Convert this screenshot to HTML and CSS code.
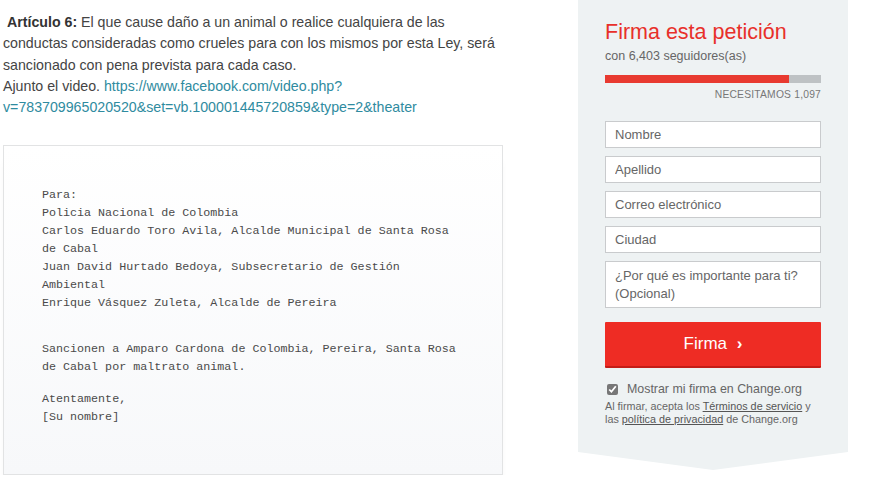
FILE: index.html
```html
<!DOCTYPE html>
<html lang="es">
<head>
<meta charset="utf-8">
<title>Firma esta petición</title>
<link rel="stylesheet" href="styles.css">
</head>
<body>
<div class="page">
  <main class="content">
    <p class="desc">&nbsp;<strong>Artículo 6:</strong> El que cause daño a un animal o realice cualquiera de las conductas consideradas como crueles para con los mismos por esta Ley, será sancionado con pena prevista para cada caso.<br>Ajunto el video. <a href="#">https://www.facebook.com/video.php?<wbr>v=783709965020520&amp;set=vb.100001445720859&amp;type=2&amp;theater</a></p>
    <div class="letter">
      <p class="l-block l-first">Para:<br>Policia Nacional de Colombia<br>Carlos Eduardo Toro Avila, Alcalde Municipal de Santa Rosa de Cabal<br>Juan David Hurtado Bedoya, Subsecretario de Gestión Ambiental<br>Enrique Vásquez Zuleta, Alcalde de Pereira</p>
      <p class="l-block">Sancionen a Amparo Cardona de Colombia, Pereira, Santa Rosa de Cabal por maltrato animal.</p>
      <p class="l-block l-last">Atentamente,<br>[Su nombre]</p>
    </div>
  </main>
  <aside class="panel">
    <h2 class="title">Firma esta petición</h2>
    <p class="count">con 6,403 seguidores(as)</p>
    <div class="progress"><div class="progress-fill" style="width:85.2%"></div></div>
    <p class="need">NECESITAMOS 1,097</p>
    <form class="form">
      <input class="field" type="text" placeholder="Nombre">
      <input class="field" type="text" placeholder="Apellido">
      <input class="field" type="text" placeholder="Correo electrónico">
      <input class="field" type="text" placeholder="Ciudad">
      <textarea class="field area" placeholder="¿Por qué es importante para ti? (Opcional)"></textarea>
      <button class="sign" type="button">Firma <span class="chev">›</span></button>
      <label class="show"><input type="checkbox" checked> Mostrar mi firma en Change.org</label>
      <p class="terms">Al firmar, acepta los <a href="#">Términos de servicio</a> y las <a href="#">política de privacidad</a> de Change.org</p>
    </form>
  </aside>
</div>
</body>
</html>
```

FILE: styles.css
```css
* { box-sizing: border-box; }
html, body { margin: 0; padding: 0; background: #fff; }
body { font-family: "Liberation Sans", Arial, sans-serif; }

.page {
  display: flex;
  align-items: flex-start;
  width: 887px;
}

.content {
  width: 500px;
  margin-left: 3px;
  padding-top: 12px;
}

.desc {
  margin: 0;
  font-size: 14.2px;
  line-height: 21.3px;
  color: #444;
}
.desc strong { color: #333; }
.desc a { color: #2f8ba0; text-decoration: none; }

.letter {
  margin-top: 27px;
  height: 330px;
  border: 1px solid #e2e3e4;
  background: linear-gradient(#ffffff, #f7f8fa);
  padding: 40px 40px 0 38px;
  font-family: "Liberation Mono", "Courier New", monospace;
  font-size: 11.7px;
  line-height: 18px;
  color: #4a4a4a;
  box-shadow: 0 12px 9px -6px rgba(0,0,0,0.18);
}
.l-block { margin: 0 0 14px; }
.l-first { margin-bottom: 28px; }
.l-last { margin-bottom: 0; }

.panel {
  width: 270px;
  margin-left: 75px;
  background: #eef2f3;
  padding: 20px 27px 45px;
  clip-path: polygon(0 0, 100% 0, 100% calc(100% - 18px), 50% 100%, 0 calc(100% - 18px));
}

.title {
  margin: 0;
  font-weight: normal;
  font-size: 21.5px;
  line-height: 24px;
  color: #e8302a;
}
.count {
  margin: 5px 0 0;
  font-size: 12.5px;
  line-height: 15px;
  color: #666;
}
.progress {
  margin-top: 11px;
  height: 8px;
  background: #bec2c4;
}
.progress-fill { height: 100%; background: #e83a30; }
.need {
  margin: 6px 0 0;
  text-align: right;
  font-size: 10.3px;
  line-height: 12px;
  color: #777;
  letter-spacing: 0.2px;
}

.form {
  display: flex;
  flex-direction: column;
  gap: 8px;
  margin-top: 20px;
}
.field {
  display: block;
  width: 100%;
  height: 27px;
  margin: 0;
  border: 1px solid #c9cbcd;
  background: #fff;
  padding: 0 9px;
  font-family: "Liberation Sans", Arial, sans-serif;
  font-size: 13px;
  color: #555;
  border-radius: 0;
  outline: none;
}
.field::placeholder { color: #666; }
.area {
  height: 47px;
  padding: 5px 9px;
  line-height: 18px;
  resize: none;
  overflow: hidden;
}
.sign {
  margin-top: 6px;
  height: 46px;
  border: 0;
  border-bottom: 2px solid #c41d17;
  background: #ee2c24;
  color: #fff;
  font-family: "Liberation Sans", Arial, sans-serif;
  font-size: 17px;
  padding: 0;
  border-radius: 1px;
}
.chev { font-weight: bold; margin-left: 5px; font-size: 17px; }
.show {
  display: flex;
  align-items: center;
  margin-top: 6px;
  font-size: 12.4px;
  color: #666;
  padding-left: 2px;
}
.show input {
  width: 11px;
  height: 11px;
  margin: 0 9px 0 0;
  accent-color: #777;
}
.terms {
  margin: -4px 0 0;
  font-size: 10.8px;
  line-height: 12.5px;
  color: #666;
}
.terms a { color: #555; text-decoration: underline; }
```
